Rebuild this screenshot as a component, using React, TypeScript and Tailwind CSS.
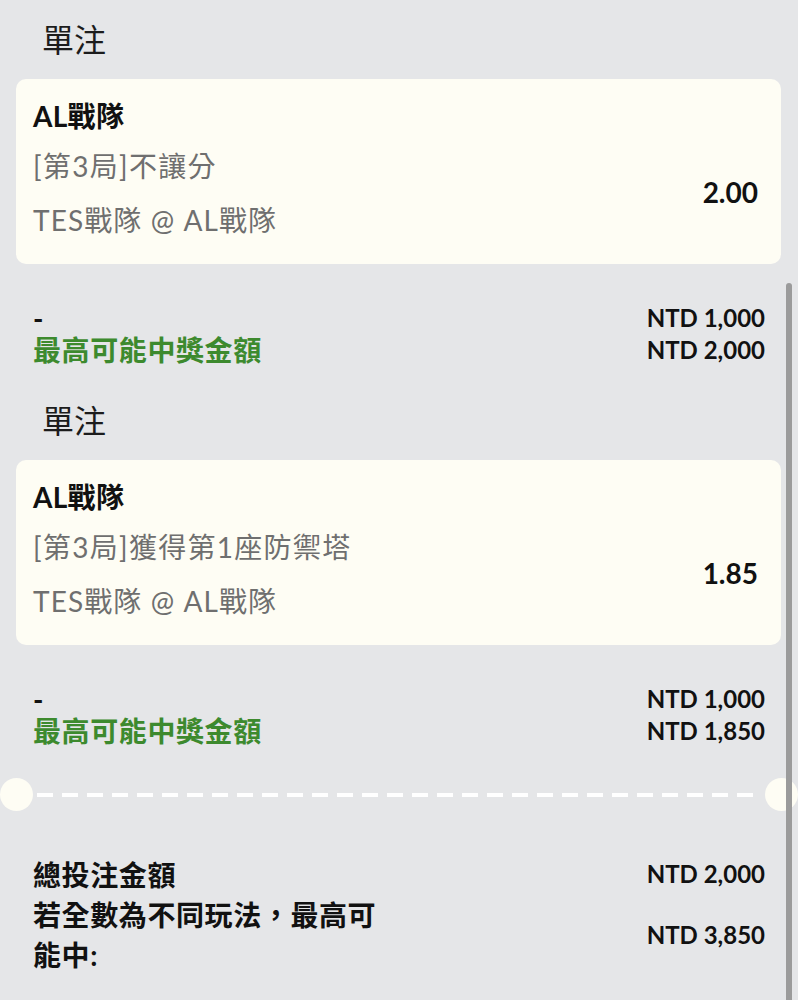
import React from "react";

const FONT = { fontFamily: 'Lato, "Noto Sans CJK TC", sans-serif' };

function Bet({ market, odds, stake, win }: { market: string; odds: string; stake: string; win: string }) {
  return (
    <div>
      <div className="h-[79px] flex items-center pl-[42px] text-[32px] text-[#1c1c1c]">單注</div>
      <div className="ml-[16px] mr-[17px] rounded-[10px] bg-[#fefdf4] pl-[17px] pr-[23px] pt-[17px] pb-[24px]">
        <div className="h-[40px] leading-[40px] text-[28px] font-bold text-[#111] tracking-[0.3px]">AL戰隊</div>
        <div className="flex items-center">
          <div className="flex-1">
            <div className="mt-[10px] h-[40px] leading-[40px] text-[28px] text-[#6f6f6f] tracking-[1.3px]">{market}</div>
            <div className="mt-[14px] h-[40px] leading-[40px] text-[28px] text-[#6f6f6f] tracking-[1.1px]">TES戰隊 @ AL戰隊</div>
          </div>
          <div className="text-[28px] font-bold text-[#111] mt-[8px]">{odds}</div>
        </div>
      </div>
      <div className="pt-[38px] pb-[15px] pl-[33px] pr-[33px] flex justify-between">
        <div className="text-[28px] font-bold leading-[32px] tracking-[0.6px]">
          <div className="text-[#111]">-</div>
          <div className="text-[#3d8a2e]">最高可能中獎金額</div>
        </div>
        <div className="text-[24px] font-bold leading-[32px] text-right text-[#111]">
          <div>{stake}</div>
          <div>{win}</div>
        </div>
      </div>
    </div>
  );
}

export default function App() {
  return (
    <div className="relative h-[1000px] w-[798px] overflow-hidden bg-[#e5e6e8]" style={FONT}>
      <Bet market="[第3局]不讓分" odds="2.00" stake="NTD 1,000" win="NTD 2,000" />
      <Bet market="[第3局]獲得第1座防禦塔" odds="1.85" stake="NTD 1,000" win="NTD 1,850" />
      <div className="-mt-[15px] pt-[31px] flex items-center">
        <div className="h-[33px] w-[33px] rounded-full bg-[#fefdf4]" />
        <div className="flex-1 mx-[4px] h-[4px] bg-[repeating-linear-gradient(to_right,#ffffff_0_16px,transparent_16px_25px)]" />
        <div className="h-[33px] w-[33px] rounded-full bg-[#fefdf4]" />
      </div>
      <div className="pt-[44px] pl-[33px] pr-[33px] text-[#111]">
        <div className="flex justify-between items-center h-[40px]">
          <div className="text-[28px] font-bold tracking-[0.6px]">總投注金額</div>
          <div className="text-[24px] font-bold -mt-[3px]">NTD 2,000</div>
        </div>
        <div className="flex justify-between items-center">
          <div className="text-[28px] font-bold leading-[40px] w-[360px] tracking-[0.6px]">若全數為不同玩法，最高可能中:</div>
          <div className="text-[24px] font-bold">NTD 3,850</div>
        </div>
      </div>
      <div className="absolute right-[6px] top-[283px] bottom-0 w-[6px] rounded-t-full bg-[#9b9b9b]" />
    </div>
  );
}
